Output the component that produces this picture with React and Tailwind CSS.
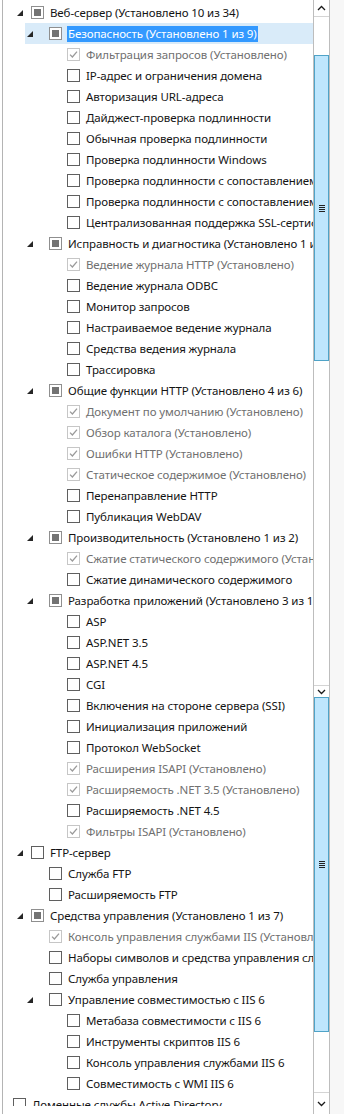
import React from "react";

// [level, state, expanded, text]; level 0 = role, 1..3 nested
const rows = [
  [1, "ind", true, "Веб-сервер (Установлено 10 из 34)"],
  [2, "ind", true, "Безопасность (Установлено 1 из 9)"],
  [3, "done", false, "Фильтрация запросов (Установлено)"],
  [3, "off", false, "IP-адрес и ограничения домена"],
  [3, "off", false, "Авторизация URL-адреса"],
  [3, "off", false, "Дайджест-проверка подлинности"],
  [3, "off", false, "Обычная проверка подлинности"],
  [3, "off", false, "Проверка подлинности Windows"],
  [3, "off", false, "Проверка подлинности с сопоставлением сертификата клиента"],
  [3, "off", false, "Проверка подлинности с сопоставлением сертификата клиента IIS"],
  [3, "off", false, "Централизованная поддержка SSL-сертификатов"],
  [2, "ind", true, "Исправность и диагностика (Установлено 1 из 6)"],
  [3, "done", false, "Ведение журнала HTTP (Установлено)"],
  [3, "off", false, "Ведение журнала ODBC"],
  [3, "off", false, "Монитор запросов"],
  [3, "off", false, "Настраиваемое ведение журнала"],
  [3, "off", false, "Средства ведения журнала"],
  [3, "off", false, "Трассировка"],
  [2, "ind", true, "Общие функции HTTP (Установлено 4 из 6)"],
  [3, "done", false, "Документ по умолчанию (Установлено)"],
  [3, "done", false, "Обзор каталога (Установлено)"],
  [3, "done", false, "Ошибки HTTP (Установлено)"],
  [3, "done", false, "Статическое содержимое (Установлено)"],
  [3, "off", false, "Перенаправление HTTP"],
  [3, "off", false, "Публикация WebDAV"],
  [2, "ind", true, "Производительность (Установлено 1 из 2)"],
  [3, "done", false, "Сжатие статического содержимого (Установлено)"],
  [3, "off", false, "Сжатие динамического содержимого"],
  [2, "ind", true, "Разработка приложений (Установлено 3 из 11)"],
  [3, "off", false, "ASP"],
  [3, "off", false, "ASP.NET 3.5"],
  [3, "off", false, "ASP.NET 4.5"],
  [3, "off", false, "CGI"],
  [3, "off", false, "Включения на стороне сервера (SSI)"],
  [3, "off", false, "Инициализация приложений"],
  [3, "off", false, "Протокол WebSocket"],
  [3, "done", false, "Расширения ISAPI (Установлено)"],
  [3, "done", false, "Расширяемость .NET 3.5 (Установлено)"],
  [3, "off", false, "Расширяемость .NET 4.5"],
  [3, "done", false, "Фильтры ISAPI (Установлено)"],
  [1, "off", true, "FTP-сервер"],
  [2, "off", false, "Служба FTP"],
  [2, "off", false, "Расширяемость FTP"],
  [1, "ind", true, "Средства управления (Установлено 1 из 7)"],
  [2, "done", false, "Консоль управления службами IIS (Установлено)"],
  [2, "off", false, "Наборы символов и средства управления службами IIS"],
  [2, "off", false, "Служба управления"],
  [2, "off", true, "Управление совместимостью с IIS 6"],
  [3, "off", false, "Метабаза совместимости с IIS 6"],
  [3, "off", false, "Инструменты скриптов IIS 6"],
  [3, "off", false, "Консоль управления службами IIS 6"],
  [3, "off", false, "Совместимость с WMI IIS 6"],
  [0, "off", false, "Доменные службы Active Directory"],
];

// spacer before the checkbox, per level
const indent = [
  "w-[10px] pr-[8px]",
  "w-[28px] pr-[8px]",
  "w-[46px] pr-[16px]",
  "w-[64px] pr-[16px]",
];

function Expander() {
  return (
    <svg width="6" height="6" viewBox="0 0 6 6">
      <polygon points="6,0 6,6 0,6" fill="#262626" />
    </svg>
  );
}

function Box({ state }) {
  if (state === "ind") {
    return (
      <span className="flex h-[13px] w-[13px] shrink-0 items-center justify-center border border-[#8f8f8f] bg-white">
        <span className="h-[7px] w-[7px] bg-[#737373]" />
      </span>
    );
  }
  if (state === "done") {
    return (
      <span className="flex h-[13px] w-[13px] shrink-0 items-center justify-center border border-[#c6c6c6] bg-white">
        <svg width="9" height="9" viewBox="0 0 9 9">
          <path d="M1 4.6 L3.4 7 L8 1.6" fill="none" stroke="#9a9a9a" strokeWidth="1.3" />
        </svg>
      </span>
    );
  }
  return <span className="h-[13px] w-[13px] shrink-0 border border-[#5f5f5f] bg-white" />;
}

function Row({ level, state, open, text, selected }) {
  return (
    <div className="relative flex h-[21px] shrink-0 items-center">
      {selected && <div className="absolute inset-y-0 left-[22px] right-0 bg-[#d9ebf9]" />}
      <div className={"relative flex h-full shrink-0 items-center justify-end " + indent[level]}>
        {open && <Expander />}
      </div>
      <div className="relative flex items-center">
        <Box state={state} />
      </div>
      <span
        className={
          "relative ml-[5px] whitespace-nowrap px-[1px] leading-[16px] " +
          (selected
            ? "bg-[#3399ff] text-white"
            : state === "done"
            ? "text-[#707070]"
            : "text-[#141414]")
        }
      >
        {text}
      </span>
    </div>
  );
}

function Chevron({ down }) {
  return (
    <svg width="9" height="6" viewBox="0 0 9 6">
      <path
        d={down ? "M1 1 L4.5 4.5 L8 1" : "M1 5 L4.5 1.5 L8 5"}
        fill="none"
        stroke="#1a1a1a"
        strokeWidth="1.3"
      />
    </svg>
  );
}

function Grip() {
  return (
    <div className="flex flex-col gap-[1px]">
      <span className="h-[1px] w-[6px] bg-[#222]" />
      <span className="h-[1px] w-[6px] bg-[#222]" />
      <span className="h-[1px] w-[6px] bg-[#222]" />
      <span className="h-[1px] w-[6px] bg-[#222]" />
    </div>
  );
}

function Thumb({ h }) {
  return (
    <div className={"flex shrink-0 items-center justify-center border border-[#4fa3c7] bg-[#bee6fd] " + h}>
      <Grip />
    </div>
  );
}

export default function App() {
  return (
    <div
      className="flex h-[1114px] w-[344px] overflow-hidden bg-white text-[11.5px] tracking-[-0.1px]"
      style={{ fontFamily: '"Noto Sans", "Open Sans", sans-serif' }}
    >
      <div className="w-[2px] shrink-0" />
      <div className="min-w-0 flex-1 border-l border-[#b4b4b4]">
        <div className="flex h-[1106px] flex-col overflow-hidden pt-[2px]">
          {rows.map(([level, state, open, text], i) => (
            <Row key={i} level={level} state={state} open={open} text={text} selected={i === 1} />
          ))}
        </div>
      </div>
      <div className="flex w-[17px] shrink-0 flex-col border-x border-[#bdbdbd] bg-white">
        <div className="flex h-[17px] shrink-0 items-center justify-center border-b border-[#d4d4d4]">
          <Chevron />
        </div>
        <div className="h-[38px] shrink-0" />
        <Thumb h="h-[306px]" />
        <div className="h-[323px] flex-1" />
        <div className="flex h-[12px] shrink-0 items-center justify-center border-t border-[#d4d4d4]">
          <Chevron down />
        </div>
        <Thumb h="h-[335px]" />
        <div className="h-[60px] shrink-0" />
        <div className="flex h-[22px] shrink-0 items-center justify-center border-t border-[#d4d4d4]">
          <Chevron down />
        </div>
      </div>
      <div className="w-[14px] shrink-0 bg-[#f7f7f7]" />
    </div>
  );
}
